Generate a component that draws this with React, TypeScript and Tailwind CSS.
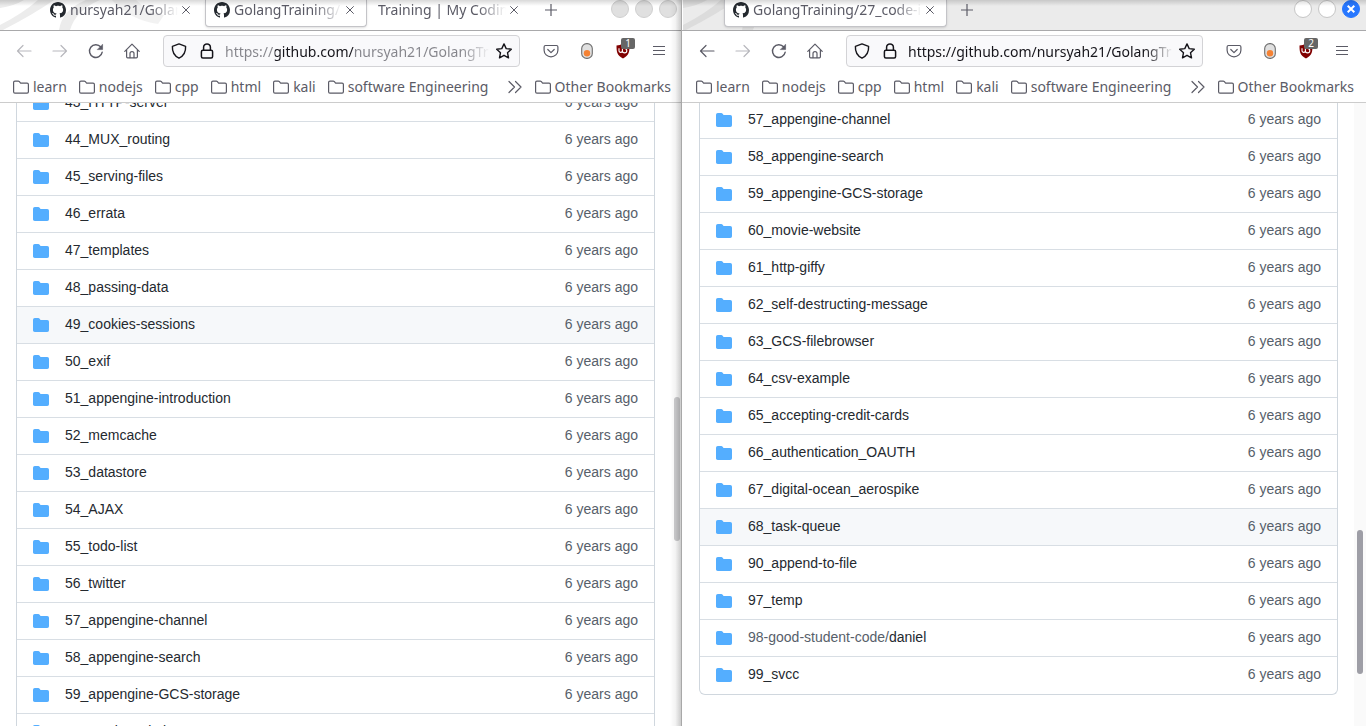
import React from "react";

type Tab = { title: string; selected?: boolean; icon?: boolean; width: string };
type Entry = { name: string; prefix?: string };

const dirs = (names: string[]): Entry[] => names.map((name) => ({ name }));

const leftEntries = dirs([
  "43_HTTP-server", "44_MUX_routing", "45_serving-files", "46_errata", "47_templates",
  "48_passing-data", "49_cookies-sessions", "50_exif", "51_appengine-introduction",
  "52_memcache", "53_datastore", "54_AJAX", "55_todo-list", "56_twitter",
  "57_appengine-channel", "58_appengine-search", "59_appengine-GCS-storage", "60_movie-website",
]);

const rightEntries: Entry[] = [
  ...dirs([
    "57_appengine-channel", "58_appengine-search", "59_appengine-GCS-storage", "60_movie-website",
    "61_http-giffy", "62_self-destructing-message", "63_GCS-filebrowser", "64_csv-example",
    "65_accepting-credit-cards", "66_authentication_OAUTH", "67_digital-ocean_aerospike",
    "68_task-queue", "90_append-to-file", "97_temp",
  ]),
  { prefix: "98-good-student-code/", name: "daniel" },
  { name: "99_svcc" },
];

const bookmarks = ["learn", "nodejs", "cpp", "html", "kali", "software Engineering"];

function Icon({ children, className = "" }: { children: React.ReactNode; className?: string }) {
  return (
    <svg viewBox="0 0 16 16" className={`size-4 shrink-0 ${className}`} fill="none" stroke="currentColor"
      strokeWidth="1.2" strokeLinecap="round" strokeLinejoin="round" aria-hidden="true">
      {children}
    </svg>
  );
}

function GithubMark() {
  return (
    <svg viewBox="0 0 16 16" className="size-4 shrink-0 text-[#24292f]" fill="currentColor" aria-hidden="true">
      <path d="M8 0C3.58 0 0 3.58 0 8c0 3.54 2.29 6.53 5.47 7.59.4.07.55-.17.55-.38 0-.19-.01-.82-.01-1.49-2.01.37-2.53-.49-2.69-.94-.09-.23-.48-.94-.82-1.13-.28-.15-.68-.52-.01-.53.63-.01 1.08.58 1.23.82.72 1.21 1.87.87 2.33.66.07-.52.28-.87.51-1.07-1.78-.2-3.64-.89-3.64-3.95 0-.87.31-1.59.82-2.15-.08-.2-.36-1.02.08-2.12 0 0 .67-.21 2.2.82.64-.18 1.32-.27 2-.27s1.36.09 2 .27c1.53-1.04 2.2-.82 2.2-.82.44 1.1.16 1.92.08 2.12.51.56.82 1.27.82 2.15 0 3.07-1.87 3.75-3.65 3.95.29.25.54.73.54 1.48 0 1.07-.01 1.93-.01 2.2 0 .21.15.46.55.38A8.01 8.01 0 0 0 16 8c0-4.42-3.58-8-8-8z" />
    </svg>
  );
}

function DirectoryIcon() {
  return (
    <svg viewBox="0 0 16 16" className="size-4 shrink-0 text-[#54aeff]" fill="currentColor" aria-hidden="true">
      <path d="M1.75 1A1.75 1.75 0 0 0 0 2.75v10.5C0 14.216.784 15 1.75 15h12.5A1.75 1.75 0 0 0 16 13.25v-8.5A1.75 1.75 0 0 0 14.25 3h-6.5a.25.25 0 0 1-.2-.1l-.9-1.2c-.33-.44-.85-.7-1.4-.7h-3.5z" />
    </svg>
  );
}

function ToolButton({ label, disabled, children }: { label: string; disabled?: boolean; children: React.ReactNode }) {
  return (
    <button type="button" aria-label={label} disabled={disabled}
      className="flex h-8 w-9 items-center justify-center text-[#5b5b66] disabled:text-[#b8b8bd]">
      {children}
    </button>
  );
}

function TabItem({ tab }: { tab: Tab }) {
  return (
    <div className={`flex h-[27px] items-start rounded-b border border-t-0 px-2 ${tab.width} ${tab.selected ? "border-[#c4c4c8] bg-white shadow-sm" : "border-transparent"}`}>
      <button type="button" className="flex h-5 min-w-0 flex-1 items-center gap-1 text-[#5b5b66]">
        {tab.icon && <GithubMark />}
        <span className="min-w-0 flex-1 overflow-hidden text-left whitespace-nowrap mask-r-from-[calc(100%-28px)] mask-r-to-100%">{tab.title}</span>
      </button>
      <button type="button" aria-label="Close tab" className="flex h-5 w-4 items-center justify-center text-[#5b5b66]">
        <svg viewBox="0 0 8 8" className="size-2" stroke="currentColor" strokeWidth="1" aria-hidden="true"><path d="M.3.3l7.4 7.4M7.7.3L.3 7.7" /></svg>
      </button>
    </div>
  );
}

function Bookmark({ label }: { label: string }) {
  return (
    <a href="#" className="flex items-center gap-1 whitespace-nowrap">
      <Icon>
        <path d="M.6 12.8V3.6c0-.8.5-1.4 1.3-1.4h3.3c.5 0 .9.2 1.2.5l1.2 1.4h6.5c.8 0 1.3.6 1.3 1.3v7.4c0 .8-.5 1.3-1.3 1.3H1.9c-.8 0-1.3-.5-1.3-1.3z" />
      </Icon>
      {label}
    </a>
  );
}

function Swoosh({ fill }: { fill: string }) {
  return (
    <svg viewBox="0 0 180 30" className="absolute top-0 left-0 h-[30px] w-[180px]" fill={fill} aria-hidden="true">
      <path d="M0 8Q14 6 24 0H0z" />
      <path d="M0 25Q22 14 38 0H54Q34 14 3 30H0z" />
      <path d="M59 30Q62 10 86 0H100Q76 10 70 30z" />
      <path d="M112 0Q130 20 158 24L164 15Q150 14 136 0z" opacity=".7" />
    </svg>
  );
}

function TitleBar({ tabs, active }: { tabs: Tab[]; active: boolean }) {
  return (
    <header className={`relative flex h-[31px] items-start border-b border-[#a9a9ab] pl-[41px] ${active ? "bg-[#ebebeb]" : "bg-white"}`}>
      <Swoosh fill={active ? "#dcdcdc" : "#ececec"} />
      <div className="relative flex min-w-0 gap-0.5">
        {tabs.map((tab) => <TabItem key={tab.title} tab={tab} />)}
      </div>
      <button type="button" aria-label="New tab" className="relative flex h-5 w-10 items-center justify-center text-[#5b5b66]">
        <svg viewBox="0 0 12 12" className="size-3" stroke="currentColor" strokeWidth="1.2" aria-hidden="true"><path d="M6 0v12M0 6h12" /></svg>
      </button>
      <div className="relative ml-auto flex h-[18px] gap-1.5 pr-1.5">
        {["Minimize", "Maximize", "Close"].map((label) => (
          <button key={label} type="button" aria-label={label}
            className={`flex size-[18px] items-center justify-center rounded-full border ${!active ? "border-[#cfcfcf] bg-[#e0e0e0]" : label === "Close" ? "border-[#2777ff] bg-[#2777ff]" : "border-[#c6c6c6] bg-white"}`}>
            {active && label === "Close" && (
              <svg viewBox="0 0 8 8" className="size-2" stroke="white" strokeWidth="2" aria-hidden="true"><path d="M.7.7l6.6 6.6M7.3.7L.7 7.3" /></svg>
            )}
          </button>
        ))}
      </div>
      <div className="pointer-events-none absolute inset-x-0 top-0 h-1.5 bg-linear-to-b from-black/15 to-transparent" />
    </header>
  );
}

function Toolbar({ active, blocked }: { active: boolean; blocked: number }) {
  return (
    <div className="flex h-10 items-center gap-[13px] px-1.5">
      <div className="flex">
        <ToolButton label="Back" disabled={!active}><Icon><path d="M15 8H1.5M7 2.5L1.5 8 7 13.5" /></Icon></ToolButton>
        <ToolButton label="Forward" disabled><Icon><path d="M1 8h13.5M9 2.5L14.5 8 9 13.5" /></Icon></ToolButton>
        <ToolButton label="Reload">
          <Icon><path strokeWidth="1.4" d="M14.2 9.2A6.4 6.4 0 1 1 12.8 4" /><path fill="currentColor" strokeWidth=".6" d="M14.6 1.6v5H9.6z" /></Icon>
        </ToolButton>
        <ToolButton label="Home">
          <Icon><path d="M.8 8.4L8 1.2l7.2 7.2M2.6 7v6.8c0 .6.4 1 1 1h8.8c.6 0 1-.4 1-1V7" /><path d="M6 14.6v-4a2 2 0 0 1 4 0v4" /></Icon>
        </ToolButton>
      </div>
      <div className="flex h-8 min-w-0 flex-1 items-center rounded border border-[#d3d3d6] bg-[#f9f9fb] px-[7px] text-[#15141a]">
        <Icon><path strokeWidth="1.4" d="M8 .9l6.6 2.4c.3 5.2-1.8 9.6-6.6 11.9C3.2 12.9 1.1 8.5 1.4 3.3z" /></Icon>
        <Icon className="ml-3"><rect x="2.4" y="7.2" width="11.2" height="7.8" rx="1.5" strokeWidth="1.5" /><path strokeWidth="1.5" d="M4.6 7V4.3a3.4 3.4 0 0 1 6.8 0V7" /></Icon>
        <input aria-label="Address" type="text" readOnly value="https://github.com/nursyah21/GolangTr"
          className={`ml-2.5 h-7 min-w-0 flex-1 mask-r-from-[calc(100%-28px)] mask-r-to-100% outline-none ${active ? "" : "bg-[linear-gradient(90deg,#85858b_50px,#15141a_50px,#15141a_129px,#85858b_129px)] bg-clip-text text-transparent"}`} />
        <button type="button" aria-label="Bookmark this page" className="ml-1.5">
          <Icon><path strokeWidth="1.4" d="M8 .9l2.2 4.7 5.1.6-3.8 3.5 1 5.1L8 12.3l-4.5 2.5 1-5.1L.7 6.2l5.1-.6z" /></Icon>
        </button>
      </div>
      <div className="flex">
        <ToolButton label="Save to Pocket">
          <Icon><path d="M2.5 2.5h11c.8 0 1.4.6 1.4 1.4v3.3a6.9 6.7 0 0 1-13.8 0V3.9c0-.8.6-1.4 1.4-1.4z" /><path d="M4.8 6.5L8 9.6l3.2-3.1" /></Icon>
        </ToolButton>
        <ToolButton label="Browsing mode">
          <svg viewBox="0 0 16 16" className="size-4" aria-hidden="true"><rect x="2.7" y=".6" width="10.6" height="14.8" rx="5" fill="#e0e0e0" stroke="#6d6d6d" strokeWidth="1.1" /><circle cx="8" cy="10.3" r="3.2" fill="#f58233" /></svg>
        </ToolButton>
        <ToolButton label="Content blocker">
          <span className="relative">
            <svg viewBox="0 0 16 16" className="size-4" aria-hidden="true"><path fill="#800000" d="M8 .5c2 1.3 4.2 2 6.5 2 0 6.5-.5 9.8-6.5 13-6-3.2-6.5-6.5-6.5-13 2.3 0 4.500-.7 6.5-2z" /><path fill="none" stroke="#fff" strokeWidth="1.1" d="M4 5.2v2.5a1.7 1.7 0 0 0 3.4 0V5.5v2.2a2.2 2.2 0 1 0 2.2-2.2" /></svg>
            <span className="absolute -top-[5px] left-1.5 h-[11px] w-3.5 rounded-xs bg-[#666] text-center text-[10px] leading-[11px] text-white">{blocked}</span>
          </span>
        </ToolButton>
        <ToolButton label="Open menu"><svg viewBox="0 0 12 12" className="size-3" stroke="currentColor" strokeWidth="1" aria-hidden="true"><path d="M0 1.5h12M0 5.5h12M0 9.5h12" /></svg></ToolButton>
      </div>
    </div>
  );
}

function FileTable({ entries, highlighted }: { entries: Entry[]; highlighted: string }) {
  return (
    <div className="overflow-hidden rounded-b-md border border-t-0 border-[#d0d7de] pb-px">
      <table className="w-full border-separate border-spacing-0">
        <tbody>
          {entries.map((e) => (
            <tr key={e.name} className={e.name === highlighted ? "bg-[#f6f8fa]" : ""}>
              <td className="h-[37px] border-t border-[#d8dee4] pl-4">
                <div className="flex items-center gap-4">
                  <DirectoryIcon />
                  <a href="#" className="pb-0.5 text-[#24292f]">
                    {e.prefix && <span className="text-[#57606a]">{e.prefix}</span>}{e.name}
                  </a>
                </div>
              </td>
              <td className="border-t border-[#d8dee4] pr-4 pb-0.5 text-right text-[#57606a]">6 years ago</td>
            </tr>
          ))}
        </tbody>
      </table>
    </div>
  );
}

type WindowProps = {
  tabs: Tab[]; active: boolean; blocked: number; entries: Entry[];
  highlighted: string; scroll: string; thumb: string;
};

function BrowserWindow({ tabs, active, blocked, entries, highlighted, scroll, thumb }: WindowProps) {
  return (
    <section className="relative flex h-screen min-w-0 flex-1 flex-col overflow-hidden bg-white">
      <TitleBar tabs={tabs} active={active} />
      <Toolbar active={active} blocked={blocked} />
      <nav className="flex h-8 shrink-0 items-center gap-3 border-b border-[#ccc] pr-3 pl-[13px] text-[#5b5b66]">
        {bookmarks.map((b) => <Bookmark key={b} label={b} />)}
        <button type="button" aria-label="More bookmarks" className="ml-auto"><Icon><path d="M2 2.5L7.5 8 2 13.5M8.5 2.5L14 8l-5.5 5.5" /></Icon></button>
        <Bookmark label="Other Bookmarks" />
      </nav>
      <div className="flex min-h-0 flex-1 overflow-hidden font-['Liberation_Sans',sans-serif] text-[14px] leading-5">
        <main className={`min-w-0 flex-1 px-4 ${scroll}`}>
          <FileTable entries={entries} highlighted={highlighted} />
        </main>
        <div className={`w-3 pl-[3px] ${thumb} ${active ? "bg-[#fafafa]" : ""}`}>
          <div className={`h-36 w-1.5 rounded-full ${active ? "bg-[#9e9ea6]" : "bg-[#cdcdcf]"}`} />
        </div>
      </div>
      {!active && <div className="pointer-events-none absolute inset-y-0 right-px w-3 border-r border-[#a8a8a8] bg-linear-to-r from-transparent via-black/5 to-black/20" />}
    </section>
  );
}

export default function App() {
  return (
    <div className="flex font-['Noto_Sans',sans-serif] text-[14px] leading-5">
      <BrowserWindow
        active={false} blocked={1} entries={leftEntries} highlighted="49_cookies-sessions"
        scroll="-mt-[19px]" thumb="pt-[294px]"
        tabs={[
          { title: "nursyah21/Golang", icon: true, width: "w-[162px]" },
          { title: "GolangTraining/2", icon: true, selected: true, width: "w-[162px]" },
          { title: "Training | My Coding", width: "w-[162px]" },
        ]}
      />
      <BrowserWindow
        active blocked={2} entries={rightEntries} highlighted="68_task-queue"
        scroll="-mt-0.5" thumb="pt-[427px]"
        tabs={[{ title: "GolangTraining/27_code-i", icon: true, selected: true, width: "w-[223px]" }]}
      />
    </div>
  );
}
